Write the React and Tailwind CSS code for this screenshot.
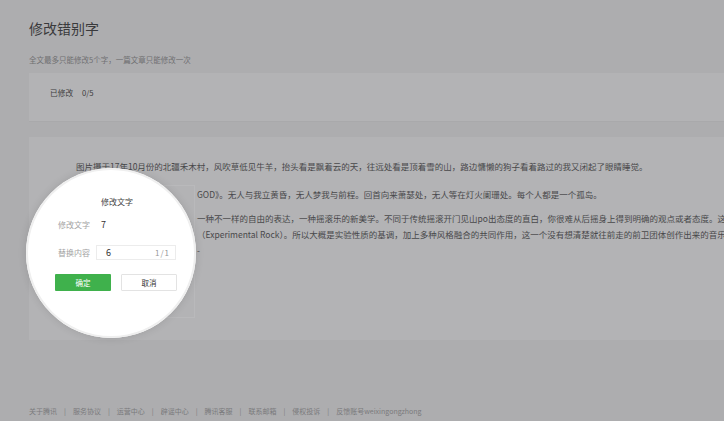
export default function App() {
  const font = { fontFamily: '"Noto Sans CJK SC", "Noto Sans", sans-serif' };
  const footer = ["关于腾讯", "服务协议", "运营中心", "辟谣中心", "腾讯客服", "联系邮箱", "侵权投诉", "反馈账号weixingongzhong"];
  return (
    <div className="relative w-[724px] h-[421px] overflow-hidden bg-[#adadaf]" style={font}>
      <div className="pl-[29px] pt-[19px]">
        <h1 className="text-[14px] leading-[18px] text-[#3a3a3c]">修改错别字</h1>
        <p className="mt-[18px] text-[7.5px] leading-[10px] text-[#707072] whitespace-nowrap">全文最多只能修改5个字，一篇文章只能修改一次</p>
        <div className="mt-[8px] h-[49px] bg-[#b3b3b5] border-b border-[#a9a9ab] pl-[21px] pt-[14px]">
          <div className="flex items-center h-[12px] text-[7.7px] leading-[12px] text-[#3e3e40]">
            <span>已修改</span>
            <span className="ml-[9px]">0/5</span>
          </div>
        </div>
        <div className="relative mt-[15px] h-[203px] bg-[#b3b3b5] pt-[21px] text-[8.5px] leading-[16px] text-[#48484a] whitespace-nowrap">
          <div className="pl-[47px]">图片摄于17年10月份的北疆禾木村，风吹草低见牛羊，抬头看是飘着云的天，往远处看是顶着雪的山，路边慵懒的狗子看着路过的我又闭起了眼睛睡觉。</div>
          <div className="pl-[168px] mt-[12px]">GOD》。无人与我立黄昏，无人梦我与前程。回首向来萧瑟处，无人等在灯火阑珊处。每个人都是一个孤岛。</div>
          <div className="pl-[168px] mt-[8px]">
            <div>一种不一样的自由的表达，一种摇滚乐的新美学。不同于传统摇滚开门见山po出态度的直白，你很难从后摇身上得到明确的观点或者态度。这</div>
            <div>（Experimental Rock）。所以大概是实验性质的基调，加上多种风格融合的共同作用，这一个没有想清楚就往前走的前卫团体创作出来的音乐</div>
            <div>-</div>
          </div>
          <div className="absolute left-[31px] top-[48px] w-[135px] h-[133px] bg-[#b3b3b5] border border-[#b9b9bb]"></div>
        </div>
        <div className="mt-[66px] flex items-center text-[7px] leading-[10px] text-[#7a7a7c] whitespace-nowrap">
          {footer.map((f, i) => (
            <span key={i} className="flex items-center">
              {i > 0 && <span className="mx-[7px]">|</span>}
              <span>{f}</span>
            </span>
          ))}
        </div>
      </div>

      <div className="absolute left-[26px] top-[168px] w-[170px] h-[170px] rounded-full bg-white shadow-[inset_0_0_0_2px_#efefef,0_0_8px_rgba(0,0,0,0.12)]">
        <div className="flex flex-col pt-[28px]">
          <div className="pl-[12px] text-center text-[8px] leading-[12px] text-[#444]">修改文字</div>
          <div className="mt-[11px] pl-[32px] flex items-center h-[12px] leading-[12px]">
            <span className="w-[43px] text-[8px] text-[#a3a3a3]">修改文字</span>
            <span className="text-[9px] text-[#333]">7</span>
          </div>
          <div className="mt-[14px] pl-[32px] flex items-center">
            <span className="w-[38px] text-[8px] leading-[12px] text-[#a3a3a3]">替换内容</span>
            <div className="w-[80px] h-[15px] border border-[#ececec] flex items-center justify-between pl-[9px] pr-[5px]">
              <span className="text-[9px] leading-[12px] text-[#333]">6</span>
              <span className="text-[8px] leading-[12px] text-[#999] tracking-[1px]">1/1</span>
            </div>
          </div>
          <div className="mt-[14px] pl-[29px] flex gap-[10px]">
            <div className="w-[56px] h-[17px] bg-[#3fb14c] rounded-[1px] flex items-center justify-center text-[7.5px] text-white">确定</div>
            <div className="w-[56px] h-[17px] border border-[#e3e3e3] rounded-[1px] flex items-center justify-center text-[7.5px] text-[#333]">取消</div>
          </div>
        </div>
      </div>
    </div>
  );
}
